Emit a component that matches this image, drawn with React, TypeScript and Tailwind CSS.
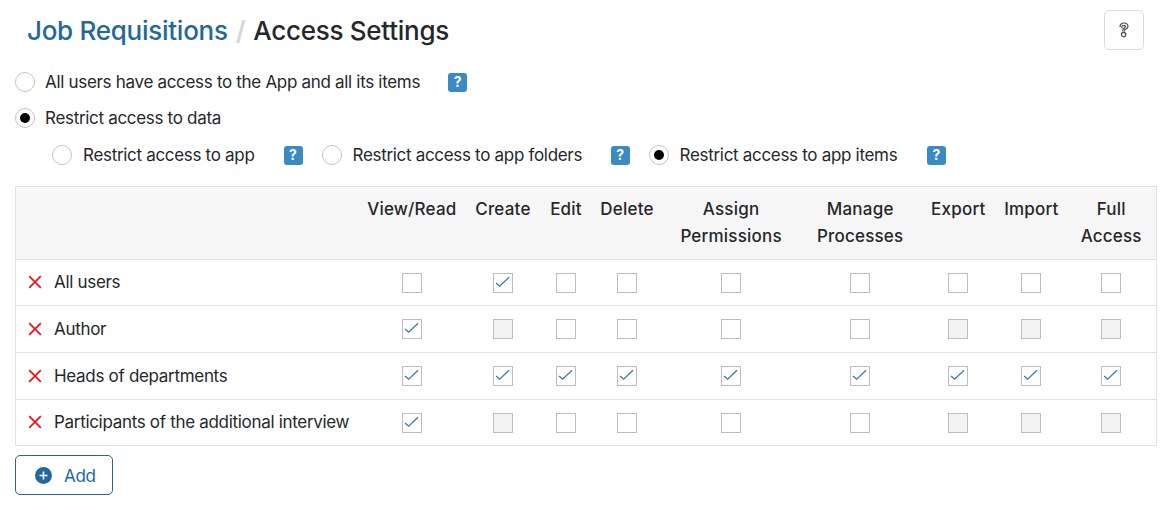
import React from "react";

const widths = [342, 108, 74, 52, 70, 138, 120, 76, 70, 90];
const heads: string[][] = [["View/Read"], ["Create"], ["Edit"], ["Delete"], ["Assign", "Permissions"], ["Manage", "Processes"], ["Export"], ["Import"], ["Full", "Access"]];
// 0 empty, 1 checked, 2 disabled
const rows: { name: string; h: string; cells: number[] }[] = [
  { name: "All users", h: "h-[46px]", cells: [0, 1, 0, 0, 0, 0, 0, 0, 0] },
  { name: "Author", h: "h-[47px]", cells: [1, 2, 0, 0, 0, 0, 2, 2, 2] },
  { name: "Heads of departments", h: "h-[47px]", cells: [1, 1, 1, 1, 1, 1, 1, 1, 1] },
  { name: "Participants of the additional interview", h: "h-[46px]", cells: [1, 2, 0, 0, 0, 0, 2, 2, 2] },
];

function Help() {
  return (
    <span className="flex h-[19px] w-[19px] items-center justify-center rounded-[3px] bg-[#3a8bc4] text-[14px] font-bold leading-none tracking-normal text-white">
      ?
    </span>
  );
}

function Radio({ on }: { on?: boolean }) {
  return (
    <span className="flex h-5 w-5 shrink-0 items-center justify-center rounded-full border border-[#c4c4c4] bg-white">
      {on && <span className="h-[10px] w-[10px] rounded-full bg-black" />}
    </span>
  );
}

function Box({ v }: { v: number }) {
  return (
    <span className={`inline-flex h-5 w-5 items-center justify-center border border-[#bdbdbd] align-middle ${v === 2 ? "bg-[#f3f3f3]" : "bg-white"}`}>
      {v === 1 && (
        <svg width="18" height="18" viewBox="0 0 18 18" fill="none">
          <path d="M2 9 L5.7 12.3 L15 3.3" stroke="#3a75ad" strokeWidth="1.2" />
        </svg>
      )}
    </span>
  );
}

export default function App() {
  return (
    <div className="min-h-[510px] w-[1168px] bg-white pl-[15px] pr-[11px] font-['Inter',sans-serif] text-[17px] leading-[24px] tracking-[-0.31px] text-[#25272b]">
      <div className="flex h-[72px] items-start justify-between pr-[13px] pt-[10px]">
        <h1 className="flex items-center pl-3 pt-[3px] text-[26px] font-medium leading-[36px] tracking-[-0.27px]">
          <span className="text-[#23689c]">Job Requisitions</span>
          <span className="mx-[8px] font-semibold text-[#d6d6d6]">/</span>
          <span>Access Settings</span>
        </h1>
        <button className="flex h-10 w-10 items-center justify-center rounded-[5px] border border-[#dcdcdc] bg-white">
          <svg width="12" height="16" viewBox="0 0 12 16" fill="none" stroke="#4a4a4a" strokeWidth="1.2">
            <path d="M2 5 C2 2.6 3.8 1 6 1 C8.2 1 10 2.6 10 4.6 C10 6.4 8 7 6.6 8 L6.6 9.6 M4.4 6.2 C3.4 6 3.4 3.4 6 3.4 C7.6 3.4 7.8 5 6.8 5.6 C5.6 6.3 4.6 7 4.6 9.6" />
            <circle cx="5.6" cy="12.6" r="2.2" />
          </svg>
        </button>
      </div>

      <div className="flex h-5 items-center">
        <Radio />
        <span className="ml-[10px]">All users have access to the App and all its items</span>
        <span className="ml-[28px]"><Help /></span>
      </div>
      <div className="mt-4 flex h-5 items-center">
        <Radio on />
        <span className="ml-[10px]">Restrict access to data</span>
      </div>
      <div className="mt-[17px] flex h-5 items-center pl-[37px]">
        <Radio />
        <span className="ml-[11px]">Restrict access to app</span>
        <span className="ml-[29px]"><Help /></span>
        <span className="ml-[19px]"><Radio /></span>
        <span className="ml-[11px]">Restrict access to app folders</span>
        <span className="ml-[28.5px]"><Help /></span>
        <span className="ml-[19px]"><Radio on /></span>
        <span className="ml-[11px]">Restrict access to app items</span>
        <span className="ml-[29.5px]"><Help /></span>
      </div>

      <table className="mt-[21px] w-[1142px] table-fixed border-collapse">
        <colgroup>
          {widths.map((w, i) => (
            <col key={i} style={{ width: w }} />
          ))}
        </colgroup>
        <thead>
          <tr className="h-[73px] border border-[#e2e2e2] bg-[#f6f6f6]">
            <th />
            {heads.map((h, i) => (
              <th key={i} className="align-top pt-[9px] text-center text-[17px] font-medium leading-[27px] tracking-[0.2px]">
                {h.map((l) => (
                  <div key={l} className="whitespace-nowrap">{l}</div>
                ))}
              </th>
            ))}
          </tr>
        </thead>
        <tbody>
          {rows.map((r) => (
            <tr key={r.name} className={`${r.h} border border-[#e2e2e2]`}>
              <td className="pb-[1px] pl-[12px]">
                <div className="flex items-center">
                  <svg width="14" height="14" viewBox="0 0 14 14" className="mr-[12px] shrink-0" stroke="#f80d1a" strokeWidth="1.7" fill="none">
                    <path d="M1.2 1.2 L12.8 12.8 M12.8 1.2 L1.2 12.8" />
                  </svg>
                  <span className="whitespace-nowrap">{r.name}</span>
                </div>
              </td>
              {r.cells.map((c, i) => (
                <td key={i} className="pb-[2px] text-center">
                  <Box v={c} />
                </td>
              ))}
            </tr>
          ))}
        </tbody>
      </table>

      <button className="mt-[9px] flex h-10 w-[98px] items-center rounded-[5px] border border-[#23689c] bg-white pl-[19px] text-[#23689c]">
        <svg width="17" height="17" viewBox="0 0 17 17" className="shrink-0">
          <circle cx="8.5" cy="8.5" r="8.5" fill="#23689c" />
          <path d="M8.5 4.5 V12.5 M4.5 8.5 H12.5" stroke="#fff" strokeWidth="1.6" />
        </svg>
        <span className="ml-[12px] pt-[1px]">Add</span>
      </button>
    </div>
  );
}
